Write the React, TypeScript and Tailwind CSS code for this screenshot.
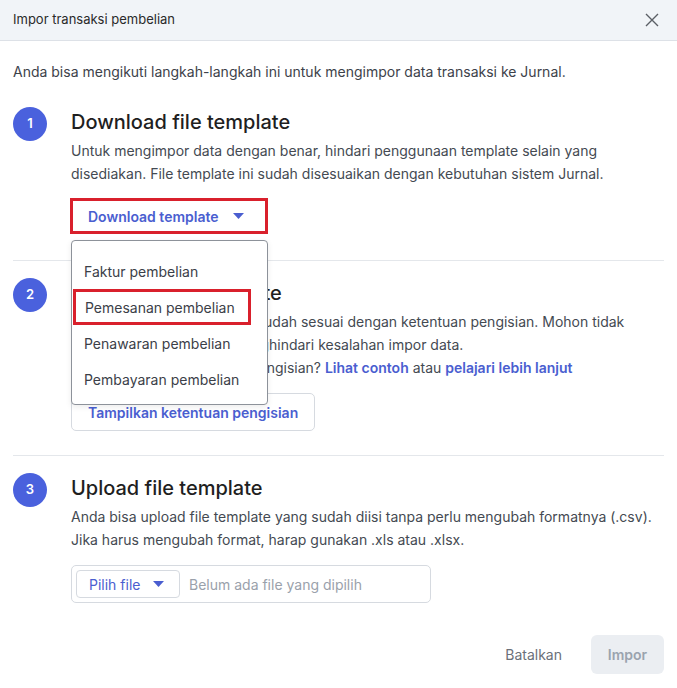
import React from "react";

function Caret({ className = "" }: { className?: string }) {
  return (
    <svg width="11" height="6" viewBox="0 0 11 6" className={className}>
      <path d="M0 0h11L5.5 6z" fill="currentColor" />
    </svg>
  );
}

function StepBadge({ n }: { n: number }) {
  return (
    <div className="flex h-[34px] w-[34px] shrink-0 items-center justify-center rounded-full bg-[#4a61dd] text-[13px] font-semibold text-white">
      {n}
    </div>
  );
}

export default function App() {
  return (
    <div
      className="relative h-[688px] w-[677px] overflow-hidden bg-white text-[#222]"
      style={{ fontFamily: "Inter, 'Noto Sans', sans-serif" }}
    >
      {/* header */}
      <div className="flex h-[41px] items-center justify-between border-b border-[#dde1e7] bg-[#f1f4f8] pl-[13px] pr-[18px]">
        <p className="text-[13px] text-[#2a2a2a]">Impor transaksi pembelian</p>
        <svg width="14" height="14" viewBox="0 0 14 14" className="text-[#5b5f66]">
          <path d="M1 1l12 12M13 1L1 13" stroke="currentColor" strokeWidth="1.4" />
        </svg>
      </div>

      <div className="px-[13px]">
        <p className="mt-[21px] text-[14px] leading-[20px] text-[#3d424a]">
          Anda bisa mengikuti langkah-langkah ini untuk mengimpor data transaksi ke Jurnal.
        </p>

        {/* step 1 */}
        <div className="mt-[25px] flex gap-[24px] border-b border-[#e4e7eb] pb-[26px]">
          <StepBadge n={1} />
          <div className="relative">
            <h2 className="mt-[1px] text-[20px] font-medium leading-[28px] text-[#1f1f1f]">
              Download file template
            </h2>
            <p className="mt-[3px] text-[14px] leading-[23px] text-[#444a52]">
              Untuk mengimpor data dengan benar, hindari penggunaan template selain yang
              <br />
              disediakan. File template ini sudah disesuaikan dengan kebutuhan sistem Jurnal.
            </p>
            <button className="-ml-[1px] mt-[13px] flex h-[36px] w-[198px] items-center gap-[14px] border-[3px] border-[#d9202c] pl-[15px] text-[14px] font-semibold text-[#4a5ed0]">
              Download template
              <Caret />
            </button>

            {/* dropdown menu */}
            <div className="absolute left-0 top-[133px] z-10 w-[197px] rounded-[4px] border border-[#8d929a] bg-white pb-[7px] pt-[12px] shadow-[0_2px_6px_rgba(0,0,0,0.08)]">
              <div className="flex h-[36px] items-center px-[12px] text-[14px] text-[#3b4048]">Faktur pembelian</div>
              <div className="ml-[1px] flex h-[36px] w-[178px] items-center border-[3px] border-[#d9202c] px-[9px] text-[14px] text-[#3b4048]">
                Pemesanan pembelian
              </div>
              <div className="flex h-[36px] items-center px-[12px] text-[14px] text-[#3b4048]">Penawaran pembelian</div>
              <div className="flex h-[36px] items-center px-[12px] text-[14px] text-[#3b4048]">Pembayaran pembelian</div>
            </div>
          </div>
        </div>

        {/* step 2 */}
        <div className="flex gap-[24px] border-b border-[#e4e7eb] pb-[24px] pt-[17px]">
          <StepBadge n={2} />
          <div>
            <h2 className="mt-[1px] text-[20px] font-medium leading-[28px] text-[#1f1f1f]">
              Lengkapi file template
            </h2>
            <p className="mt-[3px] text-[14px] leading-[23px] text-[#444a52]">
              Pastikan data yang Anda isi sudah sesuai dengan ketentuan pengisian. Mohon tidak
              <br />
              mengedit template agar menghindari kesalahan impor data.
              <br />
              Butuh bantuan terkait cara pengisian?{" "}
              <span className="font-semibold text-[#4a5ed0]">Lihat contoh</span> atau{" "}
              <span className="font-semibold text-[#4a5ed0]">pelajari lebih lanjut</span>
            </p>
            <button className="mt-[14px] flex h-[38px] items-center rounded-[5px] border border-[#d6dae0] px-[16px] text-[14px] font-semibold text-[#4a5ed0]">
              Tampilkan ketentuan pengisian
            </button>
          </div>
        </div>

        {/* step 3 */}
        <div className="flex gap-[24px] pt-[17px]">
          <StepBadge n={3} />
          <div>
            <h2 className="mt-[1px] text-[20px] font-medium leading-[28px] text-[#1f1f1f]">
              Upload file template
            </h2>
            <p className="mt-[3px] text-[14px] leading-[23px] text-[#444a52]">
              Anda bisa upload file template yang sudah diisi tanpa perlu mengubah formatnya (.csv).
              <br />
              Jika harus mengubah format, harap gunakan .xls atau .xlsx.
            </p>
            <div className="mt-[14px] flex h-[38px] w-[360px] items-center gap-[9px] rounded-[5px] border border-[#d6dae0] px-[4px]">
              <div className="flex h-[28px] w-[104px] items-center gap-[13px] rounded-[4px] border border-[#d6dae0] pl-[12px] text-[14px] text-[#4a5ed0]">
                Pilih file
                <Caret />
              </div>
              <span className="text-[14px] text-[#9aa1ab]">Belum ada file yang dipilih</span>
            </div>
          </div>
        </div>

        {/* footer */}
        <div className="mt-[32px] flex items-center justify-end gap-[29px]">
          <span className="text-[14px] text-[#6b7079]">Batalkan</span>
          <button className="flex h-[39px] w-[73px] items-center justify-center rounded-[6px] bg-[#ebeef2] text-[14px] font-semibold text-[#9aa3ae]">
            Impor
          </button>
        </div>
      </div>
    </div>
  );
}
